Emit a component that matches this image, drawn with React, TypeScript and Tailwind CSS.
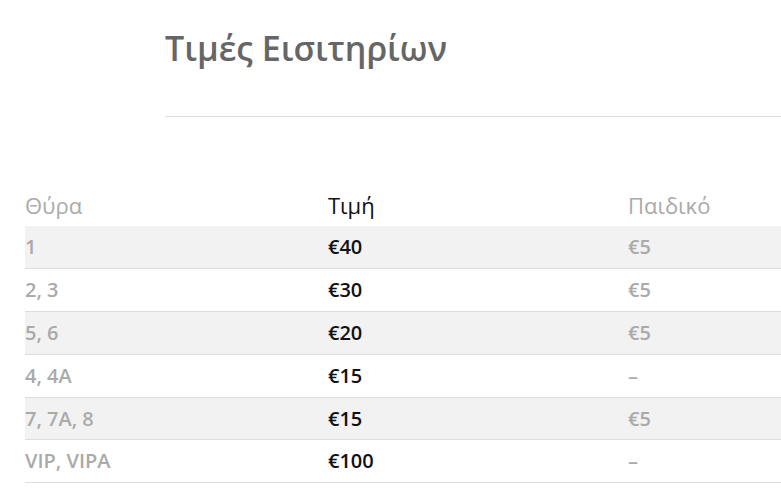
const rows = [
  { gate: '1', price: '€40', kid: '€5' },
  { gate: '2, 3', price: '€30', kid: '€5' },
  { gate: '5, 6', price: '€20', kid: '€5' },
  { gate: '4, 4A', price: '€15', kid: '–' },
  { gate: '7, 7A, 8', price: '€15', kid: '€5' },
  { gate: 'VIP, VIPA', price: '€100', kid: '–' },
];

export default function App() {
  return (
    <div className="w-[781px] h-[499px] overflow-hidden bg-white font-['Open_Sans',sans-serif]">
      <div className="pl-[165px] pt-[24px]">
        <h1 className="text-[34px] leading-[48px] text-[#666] font-semibold">Τιμές Εισιτηρίων</h1>
        <div className="mt-[44px] border-t border-[#ddd]" />
      </div>
      <table className="ml-[25px] mt-[67px] w-[906px] border-collapse text-[20px] font-semibold">
        <thead>
          <tr className="h-[42px] text-[22px]">
            <th className="w-[303px] text-left font-normal text-[#aaa]">Θύρα</th>
            <th className="w-[300px] text-left font-normal text-[#111]">Τιμή</th>
            <th className="text-left font-normal text-[#aaa]">Παιδικό</th>
          </tr>
        </thead>
        <tbody>
          {rows.map((r, i) => (
            <tr key={r.gate} className={`h-[42.8px] border-b border-[#ddd] ${i % 2 === 0 ? 'bg-[#f2f2f2]' : 'bg-white'}`}>
              <td className="text-[#aaa]">{r.gate}</td>
              <td className="text-[#111]">{r.price}</td>
              <td className="text-[#aaa]">{r.kid}</td>
            </tr>
          ))}
        </tbody>
      </table>
    </div>
  );
}
